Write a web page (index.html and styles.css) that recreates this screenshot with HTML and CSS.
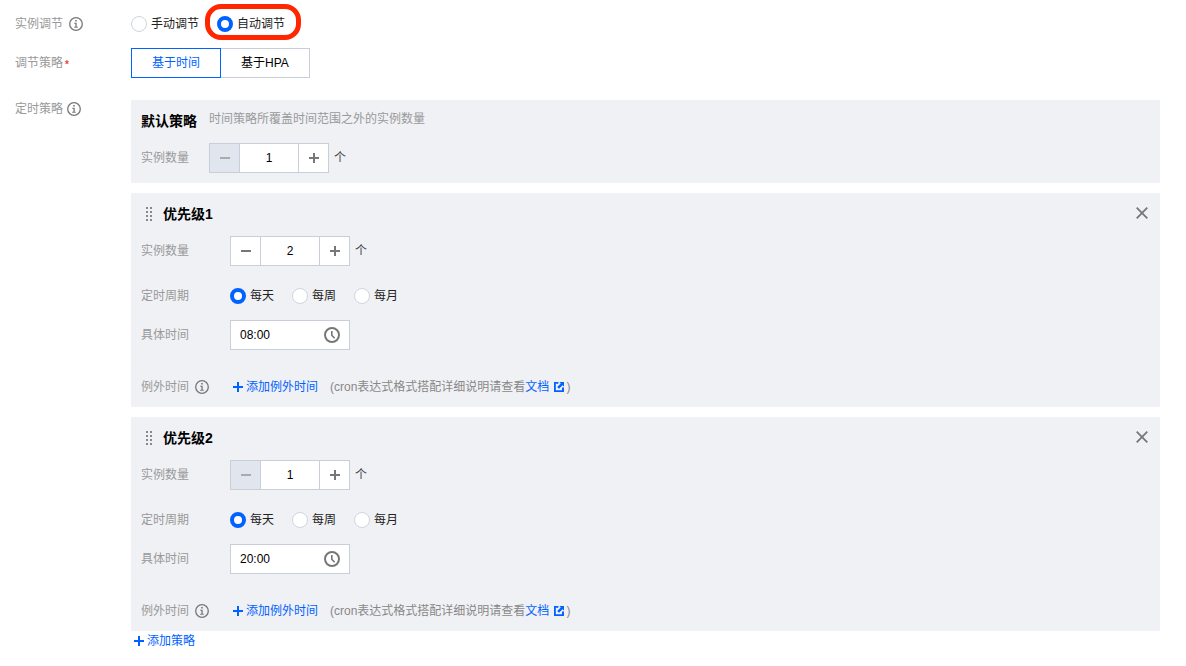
FILE: index.html
```html
<!DOCTYPE html>
<html lang="zh-CN">
<head>
	<meta charset="utf-8">
	<title>实例调节</title>
<link rel="stylesheet" href="styles.css">
</head>
<body>

<!-- shared icons -->
<svg class="sprite" aria-hidden="true">
	<symbol id="i-info" viewBox="0 0 14 14">
		<circle cx="7" cy="7" r="6.3" fill="none" stroke="currentColor" stroke-width="1.3"/>
		<path d="M6.2 3h1.6v1.5H6.2zM5.2 5.7h2.5v4h1.1v1H5.2v-1h1.2v-3H5.2z" fill="currentColor"/>
	</symbol>
	<symbol id="i-plus" viewBox="0 0 10 10">
		<path d="M4 0h2v4h4v2H6v4H4V6H0V4h4z" fill="currentColor"/>
	</symbol>
	<symbol id="i-minus" viewBox="0 0 10 10">
		<path d="M0 4h10v2H0z" fill="currentColor"/>
	</symbol>
	<symbol id="i-drag" viewBox="0 0 6 14">
		<path d="M0 0h2v2H0zM4 0h2v2H4zM0 4h2v2H0zM4 4h2v2H4zM0 8h2v2H0zM4 8h2v2H4zM0 12h2v2H0zM4 12h2v2H4z" fill="currentColor"/>
	</symbol>
	<symbol id="i-close" viewBox="0 0 12 12">
		<path d="M.7.7l10.6 10.6M11.3.7L.7 11.3" fill="none" stroke="currentColor" stroke-width="1.8"/>
	</symbol>
	<symbol id="i-clock" viewBox="0 0 16 16">
		<circle cx="8" cy="8" r="7" fill="none" stroke="currentColor" stroke-width="2"/>
		<path d="M7.8 4v4.2l2.8 3" fill="none" stroke="currentColor" stroke-width="1.6"/>
	</symbol>
	<symbol id="i-link" viewBox="0 0 10 10">
		<path d="M4.4 0H0v10h10V5.6H8v2.6H1.8V1.8h2.6zM5.4 0H10v4.6L8.5 3.2 5 6.8 3.2 5l3.6-3.5z" fill="currentColor"/>
	</symbol>
</svg>

<form class="form" autocomplete="off">
	<div class="form-row row-mode">
		<div class="form-label">实例调节 <svg class="icon-info"><use href="#i-info"/></svg></div>
		<div class="radios">
			<label class="radio"><input type="radio" name="mode">手动调节</label>
			<label class="radio highlight"><input type="radio" name="mode" checked>自动调节</label>
		</div>
	</div>

	<div class="form-row row-strategy">
		<div class="form-label">调节策略<span class="required">*</span></div>
		<div class="segment">
			<button type="button" class="active">基于时间</button>
			<button type="button">基于HPA</button>
		</div>
	</div>

	<div class="form-row">
		<div class="form-label top">定时策略 <svg class="icon-info"><use href="#i-info"/></svg></div>
		<div class="cards">

			<section class="card default">
				<div class="card-head">
					<h3>默认策略</h3>
					<p class="desc">时间策略所覆盖时间范围之外的实例数量</p>
				</div>
				<div class="field">
					<label class="form-label" for="count0">实例数量</label>
					<div class="stepper">
						<button type="button" aria-label="减少" disabled><svg><use href="#i-minus"/></svg></button>
						<input type="text" id="count0" value="1">
						<button type="button" aria-label="增加"><svg><use href="#i-plus"/></svg></button>
					</div>
					<span class="unit">个</span>
				</div>
			</section>

			<section class="card">
				<div class="card-head">
					<svg class="icon-drag"><use href="#i-drag"/></svg>
					<h3>优先级1</h3>
					<button type="button" class="close" aria-label="删除"><svg><use href="#i-close"/></svg></button>
				</div>
				<div class="field">
					<label class="form-label" for="count1">实例数量</label>
					<div class="stepper">
						<button type="button" aria-label="减少"><svg><use href="#i-minus"/></svg></button>
						<input type="text" id="count1" value="2">
						<button type="button" aria-label="增加"><svg><use href="#i-plus"/></svg></button>
					</div>
					<span class="unit">个</span>
				</div>
				<div class="field cycle">
					<div class="form-label">定时周期</div>
					<div class="radios">
						<label class="radio"><input type="radio" name="cycle1" checked>每天</label>
						<label class="radio"><input type="radio" name="cycle1">每周</label>
						<label class="radio"><input type="radio" name="cycle1">每月</label>
					</div>
				</div>
				<div class="field">
					<label class="form-label" for="time1">具体时间</label>
					<div class="time">
						<input type="text" id="time1" value="08:00">
						<svg><use href="#i-clock"/></svg>
					</div>
				</div>
				<div class="field except">
					<div class="form-label">例外时间 <svg class="icon-info"><use href="#i-info"/></svg></div>
					<button type="button" class="add"><svg><use href="#i-plus"/></svg>添加例外时间</button>
					<span class="hint">(cron表达式格式搭配详细说明请查看<a href="#">文档<svg><use href="#i-link"/></svg></a>)</span>
				</div>
			</section>

			<section class="card">
				<div class="card-head">
					<svg class="icon-drag"><use href="#i-drag"/></svg>
					<h3>优先级2</h3>
					<button type="button" class="close" aria-label="删除"><svg><use href="#i-close"/></svg></button>
				</div>
				<div class="field">
					<label class="form-label" for="count2">实例数量</label>
					<div class="stepper">
						<button type="button" aria-label="减少" disabled><svg><use href="#i-minus"/></svg></button>
						<input type="text" id="count2" value="1">
						<button type="button" aria-label="增加"><svg><use href="#i-plus"/></svg></button>
					</div>
					<span class="unit">个</span>
				</div>
				<div class="field cycle">
					<div class="form-label">定时周期</div>
					<div class="radios">
						<label class="radio"><input type="radio" name="cycle2" checked>每天</label>
						<label class="radio"><input type="radio" name="cycle2">每周</label>
						<label class="radio"><input type="radio" name="cycle2">每月</label>
					</div>
				</div>
				<div class="field">
					<label class="form-label" for="time2">具体时间</label>
					<div class="time">
						<input type="text" id="time2" value="20:00">
						<svg><use href="#i-clock"/></svg>
					</div>
				</div>
				<div class="field except">
					<div class="form-label">例外时间 <svg class="icon-info"><use href="#i-info"/></svg></div>
					<button type="button" class="add"><svg><use href="#i-plus"/></svg>添加例外时间</button>
					<span class="hint">(cron表达式格式搭配详细说明请查看<a href="#">文档<svg><use href="#i-link"/></svg></a>)</span>
				</div>
			</section>

			<button type="button" class="add add-strategy"><svg><use href="#i-plus"/></svg>添加策略</button>
		</div>
	</div>
</form>

</body>
</html>
```

FILE: styles.css
```css
*{box-sizing: border-box;}

body{margin: 0;background: #fff;color: #000;font-family: "Liberation Sans", "Noto Sans CJK SC", sans-serif;font-size: 12px;line-height: 20px;}
button,input{font: inherit;color: inherit;margin: 0;}
button{cursor: pointer;}
h3,p{margin: 0;}
svg{display: block;flex: none;}
.sprite{position: absolute;width: 0;height: 0;}

.form{padding: 4px 26px 4px 15px;}
.form-row{display: grid;grid-template-columns: 116px 1fr;align-items: center;}
.row-mode{min-height: 40px;margin-bottom: 4px;}
.row-strategy{margin-bottom: 22px;}

.form-label{display: flex;align-items: center;gap: 6px;color: #999;}
.form-label.top{align-self: start;gap: 4px;line-height: 18px;}
.icon-info{width: 14px;height: 14px;color: #777;}
.required{margin-left: -4px;padding-top: 4px;color: #e54545;font-size: 10px;font-weight: bold;line-height: 16px;}

/* radios */
.radios{display: flex;align-items: center;gap: 18px;}
.row-mode .radios{gap: 6px;}
.radio{display: flex;align-items: center;gap: 4px;color: #222;}
.radio input{appearance: none;width: 16px;height: 16px;border: 1px solid #cfd5de;border-radius: 50%;background: #fff;}
.radio input:checked{border: 4px solid #0062ff;}
.highlight{height: 36px;margin-bottom: 4px;padding: 4px 11px 0 7px;border: 5px solid #ff2600;border-radius: 16px;}

.segment{display: flex;}
.segment button{height: 30px;padding: 0 20px;border: 1px solid #c8ceda;border-left: 0;background: #fff;}
.segment .active{border: 1px solid #0062ff;color: #0062ff;}

/* strategy cards */
.cards{display: flex;flex-direction: column;gap: 10px;}
.card{padding: 10px;background: #f0f1f5;}
.card-head{display: flex;align-items: center;margin-bottom: 11px;}
.card-head h3{font-size: 14px;line-height: 22px;}
.desc{align-self: flex-start;margin-left: 12px;line-height: 18px;color: #999;}
.icon-drag{width: 6px;height: 14px;margin: 0 11px 0 5px;color: #888;}
.close{align-self: flex-start;margin-left: auto;padding: 4px 2px;border: 0;background: none;color: #777;}
.close svg{width: 12px;height: 12px;}

.field{display: flex;align-items: center;}
.field .form-label{width: 89px;}
.default .form-label{width: 68px;}
.cycle{margin: 20px 0 14px;}
.except{margin-top: 27px;}
.unit{margin-left: 5px;color: #444;}

.stepper{display: flex;width: 120px;height: 30px;border: 1px solid #c8ceda;background: #fff;}
.stepper button{display: flex;align-items: center;justify-content: center;width: 30px;padding: 0;border: 0;background: #fff;color: #777;}
.stepper button:first-child{border-right: 1px solid #c8ceda;}
.stepper button:last-child{border-left: 1px solid #c8ceda;}
.stepper button:disabled{background: #e1e5ed;color: #aaa;cursor: default;}
.stepper svg{width: 10px;height: 10px;}
.stepper input{flex: 1;min-width: 0;padding: 0;border: 0;text-align: center;}

.time{display: flex;align-items: center;width: 120px;height: 30px;padding: 0 9px;border: 1px solid #c8ceda;background: #fff;}
.time input{flex: 1;min-width: 0;padding: 0;border: 0;}
.time svg{width: 16px;height: 16px;color: #777;}

.add{display: flex;align-items: center;gap: 3px;padding: 0 3px;border: 0;background: none;color: #0062ff;}
.add svg{width: 10px;height: 10px;}
.add-strategy{align-self: flex-start;margin-top: -10px;}
.hint{display: flex;margin-left: 9px;color: #888;}
.hint a{display: flex;align-items: center;gap: 5px;margin-right: 2px;color: #0062ff;text-decoration: none;}
.hint svg{width: 10px;height: 10px;}
```
